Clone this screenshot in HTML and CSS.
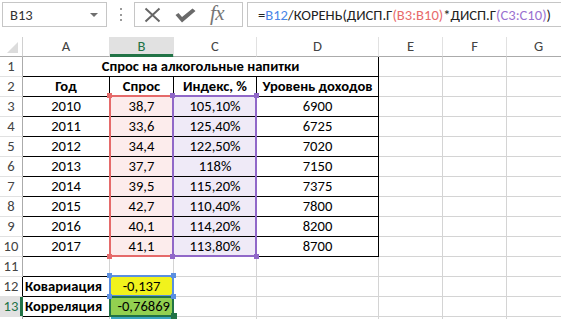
FILE: index.html
```html
<!DOCTYPE html>
<html lang="ru">
<head>
<meta charset="utf-8">
<title>Корреляция</title>
<link rel="stylesheet" href="styles.css">
</head>
<body>
<div class="toolbar">
  <div class="namebox"><span class="nb-text">B13</span><span class="nb-arrow"></span></div>
  <div class="dots"><i></i><i></i><i></i></div>
  <div class="fxgroup">
    <svg class="ic-x" width="17" height="16" viewBox="0 0 17 16"><path d="M1.5 1.5 L15.5 14.5 M15.5 1.5 L1.5 14.5" stroke="#666" stroke-width="2" fill="none"/></svg>
    <svg class="ic-ok" width="21" height="15" viewBox="0 0 21 15"><path d="M0.5 7 L3.5 5 L7 9 L17.5 0.5 L20.5 3 L7 14.5 Z" fill="#6a6a6a"/></svg>
    <span class="ic-fx">fx</span>
  </div>
  <div class="formula"><span class="f-blk">=</span><span class="f-blue">B12</span><span class="f-blk">/КОРЕНЬ(ДИСП.Г</span><span class="f-red">(B3:B10)</span><span class="f-blk">*ДИСП.Г</span><span class="f-pur">(C3:C10)</span><span class="f-blk">)</span></div>
</div>

<div class="sheet">
  <div class="corner"><span class="tri"></span></div>
  <div class="ch">A</div><div class="ch ch-sel">B</div><div class="ch">C</div><div class="ch">D</div><div class="ch">E</div><div class="ch">F</div><div class="ch">G</div>

  <div class="rh">1</div><div class="c title tb">Спрос на алкогольные напитки</div><div class="c"></div><div class="c"></div><div class="c"></div>

  <div class="rh">2</div><div class="c tb b">Год</div><div class="c tb b">Спрос</div><div class="c tb b">Индекс, %</div><div class="c tb b">Уровень доходов</div><div class="c"></div><div class="c"></div><div class="c"></div>

  <div class="rh">3</div><div class="c tb">2010</div><div class="c tb rb">38,7</div><div class="c tb rc">105,10%</div><div class="c tb">6900</div><div class="c"></div><div class="c"></div><div class="c"></div>
  <div class="rh">4</div><div class="c tb">2011</div><div class="c tb rb">33,6</div><div class="c tb rc">125,40%</div><div class="c tb">6725</div><div class="c"></div><div class="c"></div><div class="c"></div>
  <div class="rh">5</div><div class="c tb">2012</div><div class="c tb rb">34,4</div><div class="c tb rc">122,50%</div><div class="c tb">7020</div><div class="c"></div><div class="c"></div><div class="c"></div>
  <div class="rh">6</div><div class="c tb">2013</div><div class="c tb rb">37,7</div><div class="c tb rc">118%</div><div class="c tb">7150</div><div class="c"></div><div class="c"></div><div class="c"></div>
  <div class="rh">7</div><div class="c tb">2014</div><div class="c tb rb">39,5</div><div class="c tb rc">115,20%</div><div class="c tb">7375</div><div class="c"></div><div class="c"></div><div class="c"></div>
  <div class="rh">8</div><div class="c tb">2015</div><div class="c tb rb">42,7</div><div class="c tb rc">110,40%</div><div class="c tb">7800</div><div class="c"></div><div class="c"></div><div class="c"></div>
  <div class="rh">9</div><div class="c tb">2016</div><div class="c tb rb">40,1</div><div class="c tb rc">114,20%</div><div class="c tb">8200</div><div class="c"></div><div class="c"></div><div class="c"></div>
  <div class="rh">10</div><div class="c tb">2017</div><div class="c tb rb">41,1</div><div class="c tb rc">113,80%</div><div class="c tb">8700</div><div class="c"></div><div class="c"></div><div class="c"></div>

  <div class="rh">11</div><div class="c bb"></div><div class="c"></div><div class="c"></div><div class="c"></div><div class="c"></div><div class="c"></div><div class="c"></div>

  <div class="rh rh-blk">12</div><div class="c tb b left">Ковариация</div><div class="c yellow">-0,137</div><div class="c"></div><div class="c"></div><div class="c"></div><div class="c"></div><div class="c"></div>
  <div class="rh rh-sel">13</div><div class="c tb b left">Корреляция</div><div class="c green right">-0,76869</div><div class="c"></div><div class="c"></div><div class="c"></div><div class="c"></div><div class="c"></div>

  <div class="rh"></div><div class="c"></div><div class="c"></div><div class="c"></div><div class="c"></div><div class="c"></div><div class="c"></div><div class="c"></div>

  <div class="range range-red"></div>
  <div class="range range-pur"></div>
  <div class="range range-blue"></div>
  <div class="range range-act"></div>
  <div class="below"></div>
  <span class="h h-red h1"></span><span class="h h-red h2"></span>
  <span class="h h-pur h3"></span><span class="h h-pur h4"></span><span class="h h-pur h5"></span><span class="h h-pur h6"></span>
  <span class="h h-blue h7"></span><span class="h h-blue h8"></span><span class="h h-blue h9"></span><span class="h h-blue h10"></span>
  <span class="h h-act h11"></span>
</div>
</body>
</html>
```

FILE: styles.css
```css
* { box-sizing: border-box; }

html, body {
  margin: 0;
  padding: 0;
  background: #ffffff;
}

body {
  width: 561px;
  height: 319px;
  overflow: hidden;
  font-family: Carlito, "Liberation Sans", sans-serif;
  font-size: 14.6px;
  color: #000;
}

/* ---------- toolbar ---------- */
.toolbar {
  display: flex;
  align-items: flex-start;
  height: 30px;
  padding: 2px 0 0 2px;
}

.namebox {
  width: 105px;
  height: 25px;
  border: 1px solid #c6c6c6;
  display: flex;
  align-items: center;
  justify-content: space-between;
  padding: 0 8px 0 7px;
  color: #333;
  font-size: 14.6px;
}

.nb-arrow {
  width: 0;
  height: 0;
  border-left: 4px solid transparent;
  border-right: 4px solid transparent;
  border-top: 4px solid #6f6f6f;
}

.dots {
  width: 27px;
  height: 25px;
  display: flex;
  flex-direction: column;
  align-items: center;
  justify-content: center;
  gap: 3.5px;
}

.dots i {
  display: block;
  width: 2px;
  height: 2px;
  background: #9a9a9a;
}

.fxgroup {
  width: 109px;
  height: 25px;
  border: 1px solid #c6c6c6;
  display: flex;
  align-items: center;
  padding-left: 9px;
}

.ic-x { margin-top: 1px; }
.ic-ok { margin-left: 14px; margin-top: 2px; }

.ic-fx {
  margin-left: 14px;
  font-family: "Liberation Serif", "DejaVu Serif", serif;
  font-style: italic;
  font-size: 21px;
  color: #767676;
  letter-spacing: -0.5px;
  margin-top: -2px;
}

.formula {
  flex: 1;
  margin-left: 4px;
  height: 25px;
  border: 1px solid #c6c6c6;
  border-right: none;
  display: flex;
  align-items: center;
  padding-left: 10px;
  font-size: 14.6px;
  white-space: nowrap;
  color: #222;
}

.f-blue { color: #4a86e8; }
.f-red { color: #e86b6b; }
.f-pur { color: #9a71d0; }

/* ---------- sheet ---------- */
.sheet {
  position: relative;
  margin-top: 7px;
  display: grid;
  grid-template-columns: 23px 87px 64px 83px 122px 64px 64px 64px;
  grid-auto-rows: 20px;
  width: 571px;
}

.corner {
  position: relative;
  border-right: 1px solid #d0d0d0;
  border-bottom: 1px solid #ababab;
}

.tri {
  position: absolute;
  right: 4px;
  bottom: 3px;
  width: 0;
  height: 0;
  border-left: 11px solid transparent;
  border-bottom: 11px solid #dcdcdc;
}

.ch {
  display: flex;
  align-items: center;
  justify-content: center;
  color: #444;
  line-height: 19px;
  border-right: 1px solid #e1e1e1;
  border-bottom: 1px solid #ababab;
}

.ch-sel {
  background: #e1e1e1;
  color: #217346;
  box-shadow: inset 0 -2px 0 #217346;
  border-bottom-color: #217346;
}

.rh {
  display: flex;
  align-items: center;
  justify-content: center;
  color: #444;
  line-height: 19px;
  border-right: 1px solid #ababab;
  border-bottom: 1px solid #e1e1e1;
}

.rh-blk { border-right-color: #000; }

.rh-sel {
  background: #e1e1e1;
  color: #217346;
  border-right-color: #217346;
  box-shadow: inset -2px 0 0 #217346;
}

.c {
  display: flex;
  align-items: center;
  justify-content: center;
  line-height: 19px;
  white-space: nowrap;
  border-right: 1px solid #d4d4d4;
  border-bottom: 1px solid #d4d4d4;
}

.tb {
  border-right-color: #000;
  border-bottom-color: #000;
}

.bb { border-bottom-color: #000; }

.title {
  grid-column: span 4;
  font-weight: bold;
}

.b { font-weight: bold; }

.left {
  justify-content: flex-start;
  padding-left: 2px;
}

.right {
  justify-content: flex-end;
  padding-right: 3px;
}

.rb { background: #fcecec; }
.rc { background: #efeaf7; }

.yellow { background: #f1f21c; }
.green { background: #92d050; }

/* ---------- reference highlights (overlays) ---------- */
.range {
  position: absolute;
  border: 2px solid;
  pointer-events: none;
}

.range-red  { left: 109px; top: 58px; width: 65px; height: 162px; border-color: #e56a6a; }
.range-pur  { left: 172px; top: 58px; width: 85px; height: 162px; border-color: #9068c8; }
.range-blue { left: 109px; top: 238px; width: 65px; height: 22px; border-color: #5b8fe0; }
.range-act  { left: 109px; top: 259px; width: 65px; height: 21px; border-color: #217346; }

.below {
  position: absolute;
  left: 111px;
  top: 280px;
  width: 60px;
  height: 2px;
  background: #3aa6c2;
}

.h {
  position: absolute;
  width: 5px;
  height: 5px;
}

.h-red  { background: #e56a6a; }
.h-pur  { background: #9068c8; }
.h-blue { background: #5b8fe0; }
.h-act  { background: #217346; width: 6px; height: 6px; }

.h1  { left: 107px; top: 56px; }
.h2  { left: 107px; top: 217px; }
.h3  { left: 170px; top: 56px; }
.h4  { left: 254px; top: 56px; }
.h5  { left: 170px; top: 217px; }
.h6  { left: 254px; top: 217px; }
.h7  { left: 107px; top: 236px; }
.h8  { left: 171px; top: 236px; }
.h9  { left: 107px; top: 257px; }
.h10 { left: 171px; top: 257px; }
.h11 { left: 171px; top: 276px; }
```
